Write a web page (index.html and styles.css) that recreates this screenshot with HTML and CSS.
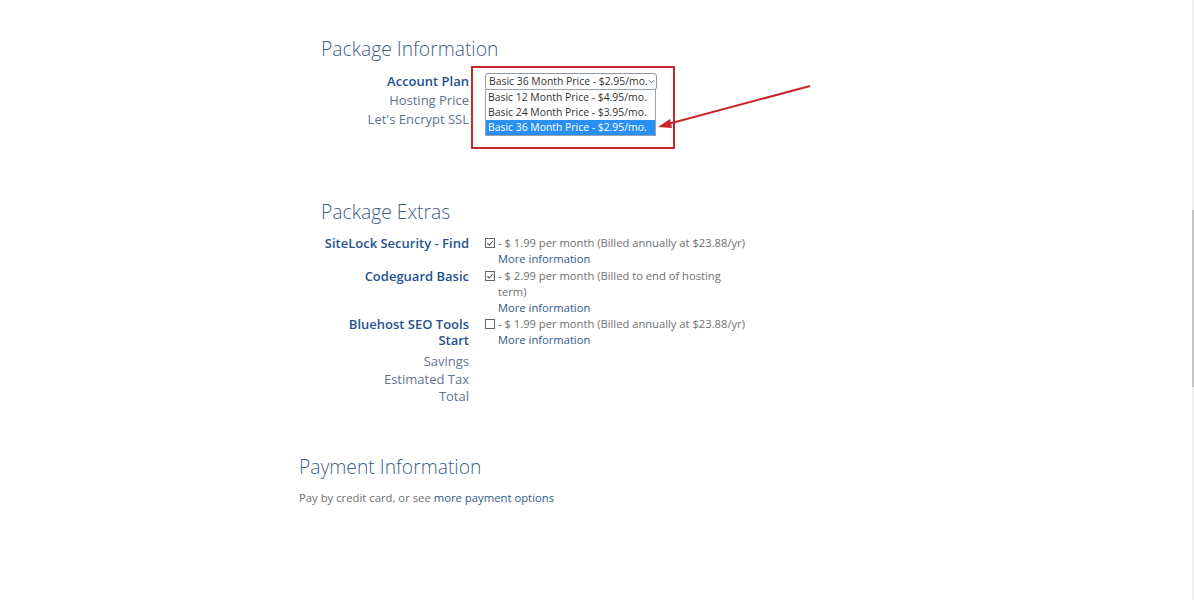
FILE: index.html
```html
<!DOCTYPE html>
<html>
<head>
<meta charset="utf-8">
<link rel="stylesheet" href="styles.css">
</head>
<body>
<main class="page">
  <section class="pkg">
    <h2 class="heading">Package Information</h2>
    <div class="form info">
      <div class="label strong">Account Plan</div>
      <div class="value">
        <div class="select-wrap">
          <div class="select">Basic 36 Month Price - $2.95/mo.<svg class="chev" viewBox="0 0 8 5" width="7" height="5"><path d="M1 1 L4 4 L7 1" fill="none" stroke="#555" stroke-width="1.1"/></svg></div>
          <ul class="options">
            <li>Basic 12 Month Price - $4.95/mo.</li>
            <li>Basic 24 Month Price - $3.95/mo.</li>
            <li class="sel">Basic 36 Month Price - $2.95/mo.</li>
          </ul>
        </div>
      </div>
      <div class="label">Hosting Price</div>
      <div class="value"></div>
      <div class="label">Let's Encrypt SSL</div>
      <div class="value"></div>
    </div>
  </section>

  <section class="pkg extras">
    <h2 class="heading">Package Extras</h2>
    <div class="form ext">
      <div class="label strong">SiteLock Security - Find</div>
      <div class="value"><span class="box"><svg viewBox="0 0 10 10" width="10" height="10"><rect x="0.5" y="0.5" width="9" height="9" fill="#fff" stroke="#666" stroke-width="1"/><path d="M2.3 5.2 L4.2 7 L7.8 3" fill="none" stroke="#555" stroke-width="1.1"/></svg></span>- $ 1.99 per month (Billed annually at $23.88/yr)<br><a class="link">More information</a></div>
      <div class="label strong">Codeguard Basic</div>
      <div class="value narrow"><span class="box"><svg viewBox="0 0 10 10" width="10" height="10"><rect x="0.5" y="0.5" width="9" height="9" fill="#fff" stroke="#666" stroke-width="1"/><path d="M2.3 5.2 L4.2 7 L7.8 3" fill="none" stroke="#555" stroke-width="1.1"/></svg></span>- $ 2.99 per month (Billed to end of hosting term)<br><a class="link">More information</a></div>
      <div class="label strong">Bluehost SEO Tools<br>Start</div>
      <div class="value"><span class="box"><svg viewBox="0 0 10 10" width="10" height="10"><rect x="0.5" y="0.5" width="9" height="9" fill="#fff" stroke="#666" stroke-width="1"/></svg></span>- $ 1.99 per month (Billed annually at $23.88/yr)<br><a class="link">More information</a></div>
    </div>
    <div class="form totals">
      <div class="label">Savings</div><div class="value"></div>
      <div class="label">Estimated Tax</div><div class="value"></div>
      <div class="label">Total</div><div class="value"></div>
    </div>
  </section>

  <section class="pay">
    <h2 class="heading">Payment Information</h2>
    <p class="paytext">Pay by credit card, or see <a class="link">more payment options</a></p>
  </section>
</main>

<div class="annot-box"></div>
<svg class="annot-arrow" width="1194" height="600" viewBox="0 0 1194 600">
  <line x1="810" y1="86" x2="668" y2="124" stroke="#c8262b" stroke-width="2"/>
  <path d="M658 127 L670 119 L672 128 Z" fill="#c8262b"/>
</svg>
<div class="scroll-track"><div class="scroll-thumb"></div></div>
</body>
</html>
```
FILE: styles.css
```css
html, body {
  margin: 0;
  padding: 0;
  background: #fff;
}
body {
  font-family: "Open Sans", "Noto Sans", sans-serif;
  width: 1194px;
  height: 600px;
  overflow: hidden;
  position: relative;
}
.page {
  padding: 35px 0 0 0;
}
.heading {
  margin: 0;
  font-weight: 300;
  font-size: 19.3px;
  line-height: 28px;
  color: #3f5f86;
}
.pkg {
  padding-left: 321px;
}
.form {
  display: grid;
  grid-template-columns: 148px 1fr;
  column-gap: 16px;
}
.info {
  margin-top: 9px;
  grid-auto-rows: 19px;
}
.label {
  text-align: right;
  font-size: 13px;
  color: #607490;
  white-space: nowrap;
}
.info .label {
  line-height: 19px;
}
.strong {
  font-weight: 600;
  color: #25528d;
}
.value {
  font-size: 11.2px;
  color: #707070;
  line-height: 15.5px;
}
.select-wrap {
  position: relative;
  width: 172px;
  margin-top: 1px;
}
.select {
  box-sizing: border-box;
  height: 17px;
  border: 1px solid #8f9aa6;
  border-radius: 3px;
  font-size: 10.4px;
  line-height: 15px;
  padding: 0 3px 0 3px;
  color: #333;
  display: flex;
  align-items: center;
  justify-content: space-between;
  white-space: nowrap;
}
.chev {
  flex: none;
}
.options {
  position: absolute;
  left: 0;
  top: 16px;
  width: 171px;
  box-sizing: border-box;
  margin: 0;
  padding: 0;
  list-style: none;
  border: 1px solid #9aa3ad;
  background: #fff;
  font-size: 10.4px;
  color: #333;
}
.options li {
  height: 15px;
  line-height: 15px;
  padding-left: 2px;
  white-space: nowrap;
}
.options li.sel {
  background: #2a8ff2;
  color: #fff;
}
.extras {
  margin-top: 69px;
}
.ext {
  margin-top: 9px;
}
.ext .label {
  line-height: 16px;
}
.ext .value {
  line-height: 16px;
  padding-left: 13px;
  text-indent: -13px;
}
.ext .value:nth-child(2) {
  margin-bottom: 1px;
}
.narrow {
  max-width: 240px;
}
.box {
  display: inline-block;
  width: 13px;
  text-indent: 0;
  vertical-align: -1px;
  line-height: 10px;
}
.box svg {
  display: block;
}
.link {
  color: #2d5b8c;
  text-decoration: none;
}
.totals {
  margin-top: 5px;
}
.totals .label {
  line-height: 17.5px;
}
.pay {
  padding-left: 299px;
  margin-top: 47px;
}
.paytext {
  margin: 9px 0 0 0;
  font-size: 11.3px;
  color: #707070;
}
.annot-box {
  position: absolute;
  left: 471px;
  top: 66px;
  width: 200px;
  height: 79px;
  border: 2px solid #c8262b;
}
.annot-arrow {
  position: absolute;
  left: 0;
  top: 0;
  pointer-events: none;
}
.scroll-track {
  position: absolute;
  right: 0;
  top: 0;
  width: 2px;
  height: 600px;
  background: #efefef;
}
.scroll-thumb {
  margin-top: 210px;
  height: 177px;
  background: #c4c4c4;
}
```
